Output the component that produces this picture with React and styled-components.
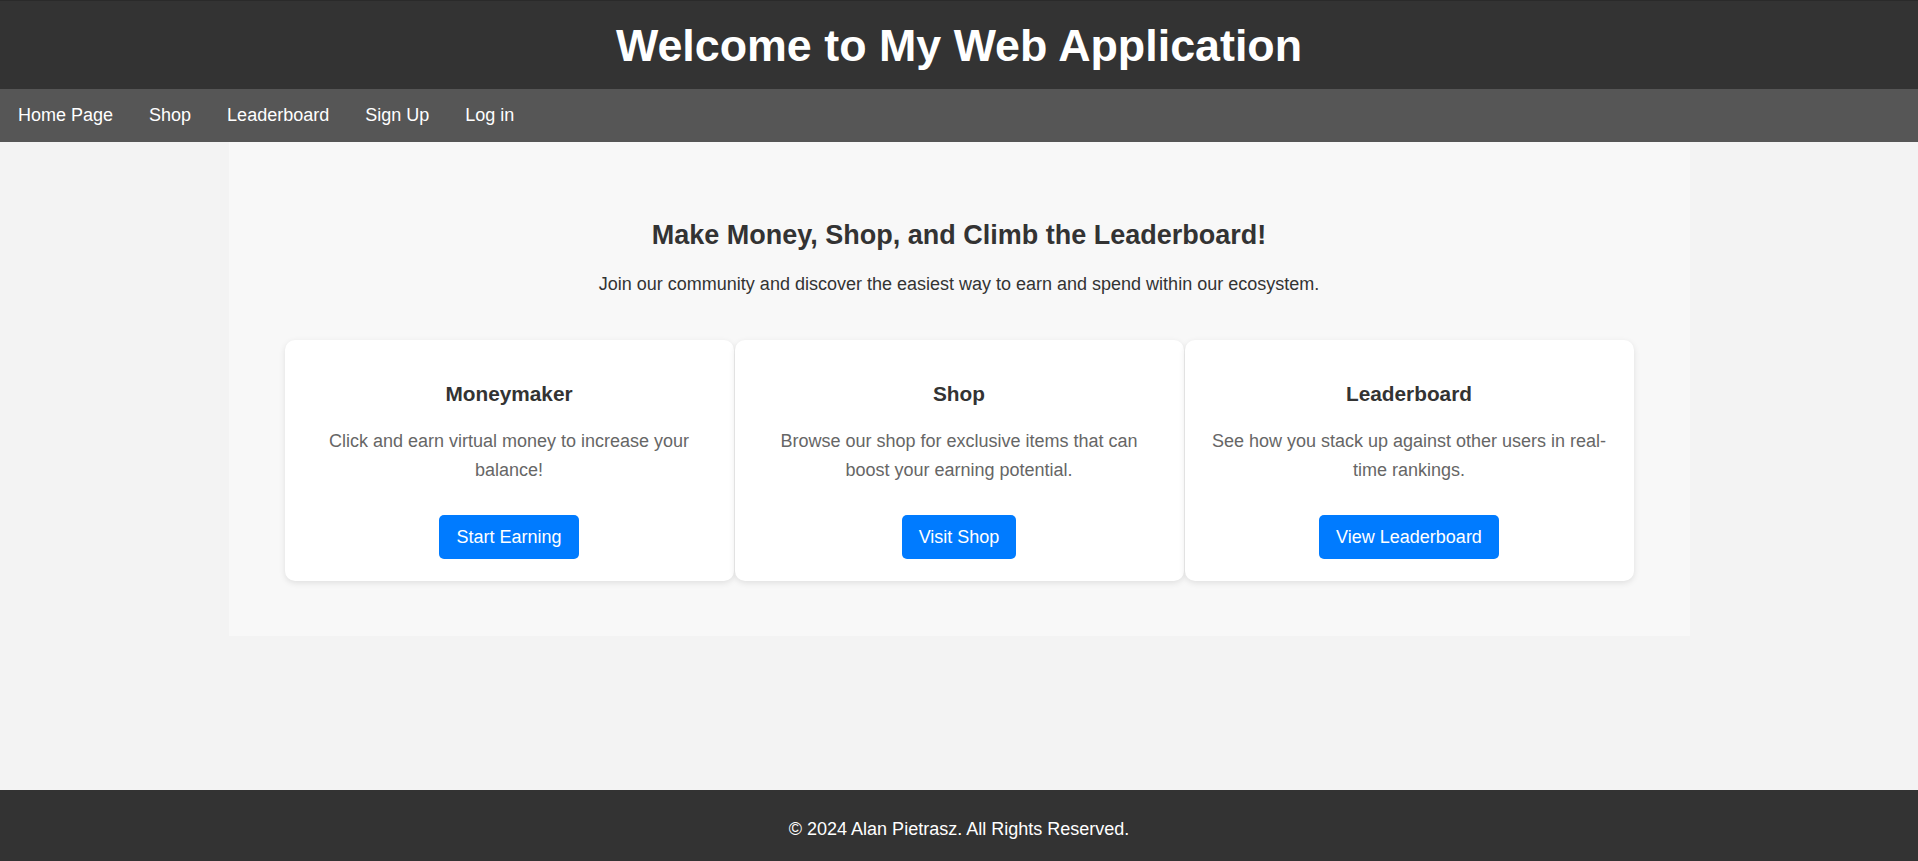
import styled, { createGlobalStyle } from "styled-components";

const GlobalStyle = createGlobalStyle`
  body {
    margin: 0;
    background-color: #f3f3f3;
    font-family: "Liberation Sans", Arial, sans-serif;
    font-size: 18px;
    color: #333;
  }
`;

const features = [
  {
    title: "Moneymaker",
    text: "Click and earn virtual money to increase your balance!",
    action: "Start Earning",
  },
  {
    title: "Shop",
    text: "Browse our shop for exclusive items that can boost your earning potential.",
    action: "Visit Shop",
  },
  {
    title: "Leaderboard",
    text: "See how you stack up against other users in real-time rankings.",
    action: "View Leaderboard",
  },
];

const links = ["Home Page", "Shop", "Leaderboard", "Sign Up", "Log in"];

export default function App() {
  return (
    <>
      <GlobalStyle />
      <Header>
        <Title>Welcome to My Web Application</Title>
      </Header>
      <Nav>
        {links.map((l) => (
          <NavLink key={l} href="#">
            {l}
          </NavLink>
        ))}
      </Nav>
      <Main>
        <Heading>Make Money, Shop, and Climb the Leaderboard!</Heading>
        <Intro>
          Join our community and discover the easiest way to earn and spend
          within our ecosystem.
        </Intro>
        <CardGrid>
          {features.map((f) => (
            <Card key={f.title}>
              <CardTitle>{f.title}</CardTitle>
              <CardText>{f.text}</CardText>
              <ActionBtn href="#">{f.action}</ActionBtn>
            </Card>
          ))}
        </CardGrid>
      </Main>
      <Footer>© 2024 Alan Pietrasz. All Rights Reserved.</Footer>
    </>
  );
}

const Header = styled.header`
  background-color: #333;
  border-top: 1px solid #2a2a2a;
  padding: 18px 0;
  text-align: center;
`;

const Title = styled.h1`
  margin: 0;
  color: #fff;
  font-size: 44.8px;
  line-height: 52px;
  font-weight: bold;
`;

const Nav = styled.nav`
  display: flex;
  background-color: #565656;
`;

const NavLink = styled.a`
  color: #fff;
  text-decoration: none;
  font-size: 18px;
  line-height: 21px;
  padding: 16px 18px;
  &:hover {
    background-color: #777;
  }
`;

const Main = styled.main`
  width: 1461px;
  box-sizing: border-box;
  margin: 0 auto;
  padding: 78px 56px 55px;
  background-color: #f8f8f8;
  text-align: center;
`;

const Heading = styled.h2`
  margin: 0 0 23px;
  font-size: 27px;
  line-height: 31px;
  color: #333;
`;

const Intro = styled.p`
  margin: 0;
  font-size: 18px;
  line-height: 21px;
  color: #333;
`;

const CardGrid = styled.div`
  display: grid;
  grid-template-columns: repeat(3, 1fr);
  gap: 1px;
  margin-top: 45px;
`;

const Card = styled.div`
  background-color: #fff;
  border-radius: 10px;
  box-shadow: 0 2px 6px rgba(0, 0, 0, 0.1);
  padding: 20px 25px 22px;
  display: flex;
  flex-direction: column;
  align-items: center;
`;

const CardTitle = styled.h3`
  margin: 22px 0 21px;
  font-size: 20.8px;
  line-height: 24px;
  color: #333;
`;

const CardText = styled.p`
  margin: 0 0 30px;
  font-size: 18px;
  line-height: 28.8px;
  color: #666;
`;

const ActionBtn = styled.a`
  display: inline-block;
  background-color: #007bff;
  color: #fff;
  text-decoration: none;
  font-size: 18px;
  line-height: 20px;
  padding: 12px 17px;
  border-radius: 5px;
  &:hover {
    background-color: #0056b3;
  }
`;

const Footer = styled.footer`
  margin-top: 154px;
  background-color: #333;
  color: #fff;
  text-align: center;
  font-size: 18px;
  line-height: 21px;
  padding: 29px 0;
`;
